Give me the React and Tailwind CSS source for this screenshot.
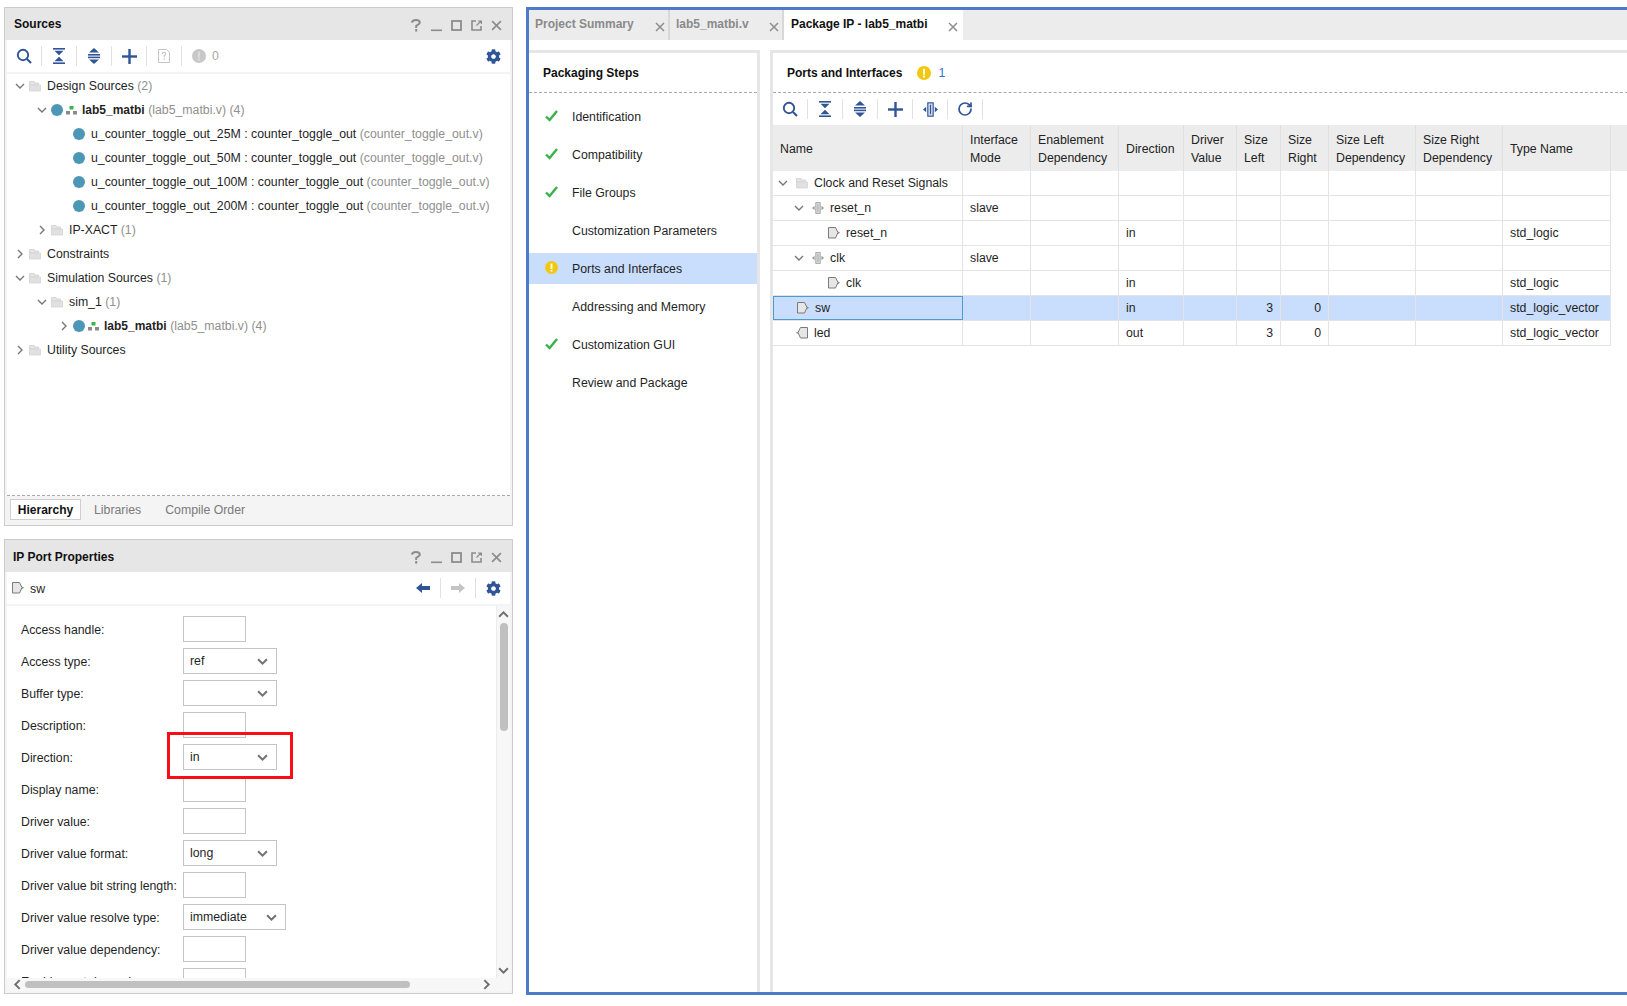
import React from 'react';
import { FaCog } from 'react-icons/fa';
import { RotateCw } from 'lucide-react';

const BLUE = '#2f5597';

function Chevron({ dir = 'down', color = '#777', size = 10, weight = 1.4 }) {
  const d = dir === 'down' ? 'M1 3 L5 7 L9 3' : dir === 'right' ? 'M3 1 L7 5 L3 9' : dir === 'left' ? 'M7 1 L3 5 L7 9' : 'M1 7 L5 3 L9 7';
  return (
    <svg width={size} height={size} viewBox="0 0 10 10" fill="none" stroke={color} strokeWidth={weight}><path d={d} /></svg>
  );
}
function Folder() {
  return (
    <svg width="12" height="12" viewBox="0 0 12 12">
      <path d="M0.5 1.5 H5 L6 3 H9.5 V5 H0.5 Z" fill="#e4e4e4" stroke="#cfcfcf" strokeWidth="0.8" />
      <path d="M0.5 5 H11.5 V11 H0.5 Z" fill="#e0e0e0" stroke="#d4d4d4" strokeWidth="0.8" />
    </svg>
  );
}
function Dot() {
  return <span className="block w-[12px] h-[12px] rounded-full bg-[#4b97b5] shrink-0" />;
}
function Hier() {
  return (
    <svg width="11" height="10" viewBox="0 0 11 10" className="shrink-0">
      <rect x="3.5" y="1" width="4" height="3.5" fill="#35b54a" />
      <rect x="0" y="6" width="4" height="3.5" fill="#8a8a8a" />
      <rect x="7" y="6" width="4" height="3.5" fill="#8a8a8a" />
    </svg>
  );
}
function PortIn() {
  return (
    <svg width="12" height="12" viewBox="0 0 12 12" className="shrink-0">
      <path d="M0.5 0.5 H7.5 L10 5.5 L7.5 11 H0.5 Z" fill="#e6e6e6" stroke="#7a7a7a" />
      <path d="M10.2 4.5 L12 5.7 L10.2 7 Z" fill="#7a7a7a" />
    </svg>
  );
}
function PortOut() {
  return (
    <svg width="12" height="12" viewBox="0 0 12 12" className="shrink-0">
      <path d="M11.5 0.5 H4.5 L2 5.5 L4.5 11 H11.5 Z" fill="#e6e6e6" stroke="#7a7a7a" />
      <path d="M1.8 4.5 L0 5.7 L1.8 7 Z" fill="#7a7a7a" />
    </svg>
  );
}
function Iface({ color = '#9a9a9a', fill = '#e8e8e8', size = 12 }) {
  return (
    <svg width={size} height={size} viewBox="0 0 14 14" className="shrink-0">
      <rect x="4.5" y="0.8" width="5" height="12.4" fill={fill} stroke={color} strokeWidth="1.1" />
      <rect x="6.4" y="2.5" width="1.2" height="9" fill={color} />
      <path d="M0 7 L3 4.5 V9.5 Z" fill={color} />
      <path d="M14 7 L11 4.5 V9.5 Z" fill={color} />
    </svg>
  );
}
function Search() {
  return (
    <svg width="16" height="16" viewBox="0 0 16 16" fill="none" stroke={BLUE}>
      <circle cx="7" cy="7" r="5.2" strokeWidth="1.9" />
      <path d="M11 11 L15 15" strokeWidth="2.2" />
    </svg>
  );
}
function Collapse() {
  return (
    <svg width="14" height="16" viewBox="0 0 14 16" fill={BLUE}>
      <rect x="1" y="0" width="12" height="1.6" />
      <path d="M2.5 2.8 H11.5 L7 7.2 Z" />
      <path d="M7 8.8 L11.5 13.2 H2.5 Z" />
      <rect x="1" y="14.4" width="12" height="1.6" />
    </svg>
  );
}
function Expand() {
  return (
    <svg width="14" height="16" viewBox="0 0 14 16" fill={BLUE}>
      <path d="M7 0 L12 4.6 H2 Z" />
      <rect x="1" y="6" width="12" height="1.6" />
      <rect x="1" y="8.6" width="12" height="1.6" />
      <path d="M2 11.4 H12 L7 16 Z" />
    </svg>
  );
}
function Plus() {
  return (
    <svg width="15" height="15" viewBox="0 0 15 15" fill={BLUE}>
      <rect x="6.3" y="0" width="2.4" height="15" />
      <rect x="0" y="6.3" width="15" height="2.4" />
    </svg>
  );
}
function Help() {
  return (
    <svg width="12" height="14" viewBox="0 0 12 14" fill="none" stroke="#c4c4c4" strokeWidth="1">
      <path d="M0.5 0.5 H8.5 L11.5 3.5 V13.5 H0.5 Z" />
      <path d="M4.3 5 Q4.5 3.4 6 3.4 Q7.7 3.4 7.7 5 Q7.7 6 6.2 6.8 V8.4 M6.2 9.6 V11" strokeWidth="1.1" />
    </svg>
  );
}
function GrayAlert() {
  return (
    <svg width="14" height="14" viewBox="0 0 14 14">
      <circle cx="7" cy="7" r="7" fill="#c8c8c8" />
      <rect x="6" y="3" width="2" height="5.5" fill="#dedede" />
      <rect x="6" y="9.6" width="2" height="1.8" fill="#dedede" />
    </svg>
  );
}
function Warn({ size = 14 }) {
  return (
    <svg width={size} height={size} viewBox="0 0 14 14" className="shrink-0">
      <circle cx="7" cy="7" r="7" fill="#f2c80f" />
      <rect x="6" y="2.8" width="2" height="5.8" fill="#ffffff" />
      <rect x="6" y="9.6" width="2" height="1.8" fill="#ffffff" />
    </svg>
  );
}
function Check() {
  return (
    <svg width="13" height="12" viewBox="0 0 13 12" fill="none" stroke="#38b249" strokeWidth="2.4">
      <path d="M1 6.5 L4.6 10 L12 1" />
    </svg>
  );
}
function Cross({ color = '#8c8c8c', size = 10 }) {
  return (
    <svg width={size} height={size} viewBox="0 0 10 10" stroke={color} strokeWidth="1.5"><path d="M1 1 L9 9 M9 1 L1 9" /></svg>
  );
}
function WindowButtons() {
  return (
    <div className="flex items-center ml-auto mr-[6px] mt-[11px]">
      <span className="w-[20px] flex justify-center">
        <svg width="10" height="13" viewBox="0 0 10 13" fill="none" stroke="#8c8c8c" strokeWidth="2"><path d="M1 3.6 Q1.2 1 5 1 Q8.8 1 8.8 3.6 Q8.8 5 5.2 6.8 V9" /><path d="M5.2 10 V12.6" /></svg>
      </span>
      <span className="w-[20px] flex justify-center"><svg width="11" height="13" viewBox="0 0 11 13" fill="#8c8c8c"><rect x="0" y="10.5" width="11" height="1.6" /></svg></span>
      <span className="w-[20px] flex justify-center"><svg width="11" height="11" viewBox="0 0 11 11" fill="none" stroke="#8c8c8c" strokeWidth="1.8"><rect x="1" y="1" width="9" height="9" /></svg></span>
      <span className="w-[20px] flex justify-center">
        <svg width="11" height="11" viewBox="0 0 11 11" fill="none" stroke="#8c8c8c" strokeWidth="1.6"><path d="M5 1 H1 V10 H10 V6" /><path d="M5.5 5.5 L10 1 M7 1 H10.5 V4" strokeWidth="1.2" /></svg>
      </span>
      <span className="w-[20px] flex justify-center"><Cross size={11} /></span>
    </div>
  );
}
function Sep() {
  return <span className="block w-px h-[20px] bg-[#e2e2e2] shrink-0" />;
}
function Tool({ children }) {
  return <span className="w-[34px] h-[20px] flex items-center justify-center shrink-0">{children}</span>;
}

const indents = ['pl-[7px]', 'pl-[29px]', 'pl-[51px]'];
function Row({ depth = 0, open, children }) {
  return (
    <div className={`h-[24px] flex items-center ${indents[depth]}`}>
      <span className="w-[12px] flex justify-center shrink-0">
        {open === undefined ? null : <Chevron dir={open ? 'down' : 'right'} />}
      </span>
      {children}
    </div>
  );
}
const G = ({ children }) => <span className="text-[#8f8f8f]">{children}</span>;

function FolderRow({ depth, open, name, count }) {
  return (
    <Row depth={depth} open={open}>
      <span className="ml-[3px] mr-[6px]"><Folder /></span>
      <span>{name}{count ? <G> {count}</G> : null}</span>
    </Row>
  );
}
function Top({ depth, open }) {
  return (
    <Row depth={depth} open={open}>
      <span className="ml-[3px] mr-[3px]"><Dot /></span>
      <span className="mr-[5px]"><Hier /></span>
      <span><b className="font-bold text-[12px]">lab5_matbi</b> <G>(lab5_matbi.v) (4)</G></span>
    </Row>
  );
}
function Leaf({ name }) {
  return (
    <Row depth={2}>
      <span className="ml-[3px] mr-[6px]"><Dot /></span>
      <span className="whitespace-nowrap">{name} <G>(counter_toggle_out.v)</G></span>
    </Row>
  );
}

function SourcesPanel() {
  return (
    <section className="h-[519px] border border-[#cccccc] bg-[#f4f4f4] flex flex-col">
      <header className="h-[32px] bg-[#e6e6e6] flex items-start shrink-0">
        <h2 className="font-bold text-[12px] pl-[9px] pt-[8px] text-[#111]">Sources</h2>
        <WindowButtons />
      </header>
      <div className="mx-[2px] h-[32px] bg-white flex items-center shrink-0">
        <Tool><Search /></Tool><Sep />
        <Tool><Collapse /></Tool><Sep />
        <Tool><Expand /></Tool><Sep />
        <Tool><Plus /></Tool><Sep />
        <Tool><Help /></Tool><Sep />
        <Tool><GrayAlert /></Tool>
        <span className="text-[#a8a8a8] -ml-[4px]">0</span>
        <span className="ml-auto mr-[9px] flex"><FaCog size={15} color={BLUE} /></span>
      </div>
      <div className="mx-[2px] mt-[2px] flex-1 bg-white min-h-0 border-b border-dashed border-[#aaaaaa]">
        <FolderRow depth={0} open={true} name="Design Sources" count="(2)" />
        <Top depth={1} open={true} />
        <Leaf name="u_counter_toggle_out_25M : counter_toggle_out" />
        <Leaf name="u_counter_toggle_out_50M : counter_toggle_out" />
        <Leaf name="u_counter_toggle_out_100M : counter_toggle_out" />
        <Leaf name="u_counter_toggle_out_200M : counter_toggle_out" />
        <FolderRow depth={1} open={false} name="IP-XACT" count="(1)" />
        <FolderRow depth={0} open={false} name="Constraints" />
        <FolderRow depth={0} open={true} name="Simulation Sources" count="(1)" />
        <FolderRow depth={1} open={true} name="sim_1" count="(1)" />
        <Top depth={2} open={false} />
        <FolderRow depth={0} open={false} name="Utility Sources" />
      </div>
      <div className="h-[29px] shrink-0 mx-[2px] flex items-center pl-[3px] pb-[2px]">
        <span className="h-[21px] w-[71px] bg-white border border-[#d0d0d0] flex items-center justify-center font-bold text-[12px] text-[#111]">Hierarchy</span>
        <span className="ml-[13px] text-[#7a7a7a]">Libraries</span>
        <span className="ml-[24px] text-[#7a7a7a]">Compile Order</span>
      </div>
    </section>
  );
}

const props = [
  ['Access handle:', 'i'],
  ['Access type:', 's', 'ref'],
  ['Buffer type:', 's', ''],
  ['Description:', 'i'],
  ['Direction:', 's', 'in'],
  ['Display name:', 'i'],
  ['Driver value:', 'i'],
  ['Driver value format:', 's', 'long'],
  ['Driver value bit string length:', 'i'],
  ['Driver value resolve type:', 'w', 'immediate'],
  ['Driver value dependency:', 'i'],
  ['Enablement dependency:', 'i'],
];

function Field({ kind, value }) {
  if (kind === 'i') return <span className="block w-[63px] h-[26px] border border-[#c4c4c4] bg-white" />;
  return (
    <span className={`h-[26px] border border-[#c4c4c4] bg-white flex items-center pl-[6px] pr-[8px] justify-between ${kind === 'w' ? 'w-[103px]' : 'w-[94px]'}`}>
      <span>{value}</span>
      <Chevron size={11} color="#707070" weight={1.8} />
    </span>
  );
}

function PropsPanel() {
  return (
    <section className="mt-[13px] h-[455px] border border-[#cccccc] bg-[#f4f4f4] flex flex-col relative">
      <header className="h-[32px] bg-[#e6e6e6] flex items-start shrink-0">
        <h2 className="font-bold text-[12px] pl-[8px] pt-[9px] text-[#111]">IP Port Properties</h2>
        <WindowButtons />
      </header>
      <div className="mx-[2px] h-[32px] bg-white flex items-center pl-[5px] shrink-0">
        <PortIn />
        <span className="ml-[6px] pt-[1px]">sw</span>
        <span className="ml-auto flex items-center">
          <svg width="14" height="10" viewBox="0 0 14 10" fill={BLUE}><path d="M0 5 L6 0 V3 H14 V7 H6 V10 Z" /></svg>
          <span className="w-[10px]" />
          <Sep />
          <span className="w-[10px]" />
          <svg width="14" height="10" viewBox="0 0 14 10" fill="#c4c4c4"><path d="M14 5 L8 0 V3 H0 V7 H8 V10 Z" /></svg>
          <span className="w-[10px]" />
          <Sep />
          <span className="ml-[10px] mr-[9px] flex"><FaCog size={15} color={BLUE} /></span>
        </span>
      </div>
      <div className="mx-[2px] mt-[2px] flex-1 min-h-0 bg-white flex">
        <div className="flex-1 min-w-0 overflow-hidden pl-[14px] pt-[10px] flex flex-col gap-[6px]">
          {props.map(([label, kind, value]) => (
            <div key={label} className="flex items-center h-[26px] shrink-0">
              <span className="w-[162px] pt-[1px] whitespace-nowrap shrink-0">{label}</span>
              <Field kind={kind} value={value} />
            </div>
          ))}
        </div>
        <div className="w-[14px] bg-[#f7f7f7] border-l border-[#ececec] flex flex-col items-center shrink-0">
          <span className="mt-[3px] flex"><Chevron dir="up" size={11} color="#707070" weight={1.8} /></span>
          <span className="mt-[3px] w-[8px] h-[108px] rounded-full bg-[#c0c0c0]" />
          <span className="mt-auto mb-[2px] flex"><Chevron size={11} color="#707070" weight={1.8} /></span>
        </div>
      </div>
      <div className="mx-[2px] mb-[2px] h-[13px] bg-[#f7f7f7] flex items-center shrink-0">
        <span className="ml-[5px] flex"><Chevron dir="left" size={11} color="#707070" weight={1.8} /></span>
        <span className="ml-[2px] w-[385px] h-[7px] rounded-full bg-[#c0c0c0]" />
        <span className="ml-auto mr-[18px] flex"><Chevron dir="right" size={11} color="#707070" weight={1.8} /></span>
      </div>
      <span className="absolute left-[162px] top-[192px] w-[126px] h-[47px] border-[3px] border-[#fb0d16]" />
    </section>
  );
}

const steps = [
  ['Identification', 'check'],
  ['Compatibility', 'check'],
  ['File Groups', 'check'],
  ['Customization Parameters', ''],
  ['Ports and Interfaces', 'warn'],
  ['Addressing and Memory', ''],
  ['Customization GUI', 'check'],
  ['Review and Package', ''],
];

function StepsPanel() {
  return (
    <div className="w-[231px] border-t-[3px] border-r-[3px] border-[#e6e6e6] shrink-0">
      <div className="h-[40px] border-b border-dashed border-[#aaaaaa] flex items-center pl-[14px] font-bold text-[12px] text-[#111]">Packaging Steps</div>
      <div className="pt-[8px] flex flex-col gap-[7px]">
        {steps.map(([name, st]) => (
          <div key={name} className={`h-[31px] flex items-center ${st === 'warn' ? 'bg-[#c9ddfc]' : ''}`}>
            <span className="w-[43px] pl-[16px] flex shrink-0 -mt-[2px]">
              {st === 'check' ? <Check /> : st === 'warn' ? <Warn size={13} /> : null}
            </span>
            <span>{name}</span>
          </div>
        ))}
      </div>
    </div>
  );
}

const colW = [
  'w-[190px]', 'w-[68px]', 'w-[88px]', 'w-[65px]', 'w-[53px]', 'w-[44px]', 'w-[48px]', 'w-[87px]', 'w-[87px]', 'w-[108px]',
];
const headers = ['Name', 'Interface\nMode', 'Enablement\nDependency', 'Direction', 'Driver\nValue', 'Size\nLeft', 'Size\nRight', 'Size Left\nDependency', 'Size Right\nDependency', 'Type Name'];

const rows = [
  { name: 'Clock and Reset Signals', pad: 'pl-[5px]', chev: true, icon: 'folder' },
  { name: 'reset_n', pad: 'pl-[21px]', chev: true, icon: 'iface', mode: 'slave' },
  { name: 'reset_n', pad: 'pl-[55px]', icon: 'in', dir: 'in', type: 'std_logic' },
  { name: 'clk', pad: 'pl-[21px]', chev: true, icon: 'iface', mode: 'slave' },
  { name: 'clk', pad: 'pl-[55px]', icon: 'in', dir: 'in', type: 'std_logic' },
  { name: 'sw', pad: 'pl-[23px]', icon: 'in', dir: 'in', l: '3', r: '0', type: 'std_logic_vector', sel: true },
  { name: 'led', pad: 'pl-[23px]', icon: 'out', dir: 'out', l: '3', r: '0', type: 'std_logic_vector' },
];

function Icon({ kind }) {
  if (kind === 'folder') return <Folder />;
  if (kind === 'iface') return <Iface />;
  if (kind === 'in') return <PortIn />;
  return <PortOut />;
}

function Cell({ i, children, right, sel }) {
  return (
    <div className={`${colW[i]} h-full shrink-0 border-r border-[#e4e4e4] flex items-center px-[7px] ${right ? 'justify-end' : ''} ${sel ? 'bg-[#c9ddfc]' : ''}`}>
      {children}
    </div>
  );
}

function PortsPanel() {
  return (
    <div className="flex-1 min-w-0 ml-[10px] border-t-[3px] border-l-[3px] border-[#e6e6e6]">
      <div className="h-[40px] border-b border-dashed border-[#aaaaaa] flex items-center pl-[14px]">
        <span className="font-bold text-[12px] text-[#111]">Ports and Interfaces</span>
        <span className="ml-[15px]"><Warn /></span>
        <span className="ml-[7px] text-[#2f6fe0]">1</span>
      </div>
      <div className="h-[32px] flex items-center">
        <Tool><Search /></Tool><Sep />
        <Tool><Collapse /></Tool><Sep />
        <Tool><Expand /></Tool><Sep />
        <Tool><Plus /></Tool><Sep />
        <Tool><Iface color={BLUE} fill="#dfe6f2" size={15} /></Tool><Sep />
        <Tool><RotateCw size={16} color={BLUE} strokeWidth={2.6} /></Tool><Sep />
      </div>
      <div className="h-[46px] bg-[#ececec] flex">
        {headers.map((h, i) => (
          <div key={h} className={`${colW[i]} shrink-0 border-r border-[#e0e0e0] flex items-center px-[7px] pt-[1px] whitespace-pre-line leading-[18px] text-[#222]`}>{h}</div>
        ))}
      </div>
      {rows.map((r, idx) => (
        <div key={idx} className="h-[25px] flex">
          <div className="flex h-full border-b border-[#e4e4e4]">
            <div className={`${colW[0]} h-full shrink-0 flex items-center ${r.pad} ${r.sel ? 'bg-[#c9ddfc] border border-[#4d9bd0]' : 'border-r border-[#e4e4e4]'}`}>
              {r.chev ? <span className="w-[10px] mr-[8px] flex"><Chevron /></span> : null}
              <span className="mr-[6px] flex"><Icon kind={r.icon} /></span>
              <span>{r.name}</span>
            </div>
            <Cell i={1} sel={r.sel}>{r.mode}</Cell>
            <Cell i={2} sel={r.sel} />
            <Cell i={3} sel={r.sel}>{r.dir}</Cell>
            <Cell i={4} sel={r.sel} />
            <Cell i={5} sel={r.sel} right>{r.l}</Cell>
            <Cell i={6} sel={r.sel} right>{r.r}</Cell>
            <Cell i={7} sel={r.sel} />
            <Cell i={8} sel={r.sel} />
            <Cell i={9} sel={r.sel}>{r.type}</Cell>
          </div>
        </div>
      ))}
    </div>
  );
}

function Tab({ label, active, w }) {
  return (
    <div className={`${w} h-full flex shrink-0 pt-[6px] text-[12px] font-bold ${active ? 'pl-[7px] bg-white text-[#111]' : 'pl-[6px] bg-[#ececec] text-[#8a8a8a] border-r-2 border-[#d8d8d8]'}`}>
      <span className="whitespace-nowrap">{label}</span>
      <span className={`ml-auto mt-[6px] ${active ? 'mr-[5px]' : 'mr-[3px]'}`}><Cross size={10} color="#8c8c8c" /></span>
    </div>
  );
}

export default function App() {
  return (
    <div className="w-[1627px] h-[1006px] overflow-hidden bg-white pt-[7px] flex text-[12.3px] leading-[16px] text-[#1f1f1f] font-['Liberation_Sans',Arial,sans-serif]">
      <div className="ml-[4px] w-[509px] shrink-0">
        <SourcesPanel />
        <PropsPanel />
      </div>
      <main className="ml-[13px] w-[1110px] h-[988px] border-[3px] border-[#4a7cc9] flex flex-col shrink-0">
        <div className="h-[30px] bg-[#ececec] flex shrink-0">
          <Tab label="Project Summary" w="w-[141px]" />
          <Tab label="lab5_matbi.v" w="w-[114px]" />
          <Tab label="Package IP - lab5_matbi" active w="w-[179px]" />
        </div>
        <div className="mt-[10px] flex-1 flex min-h-0">
          <StepsPanel />
          <PortsPanel />
        </div>
      </main>
    </div>
  );
}
